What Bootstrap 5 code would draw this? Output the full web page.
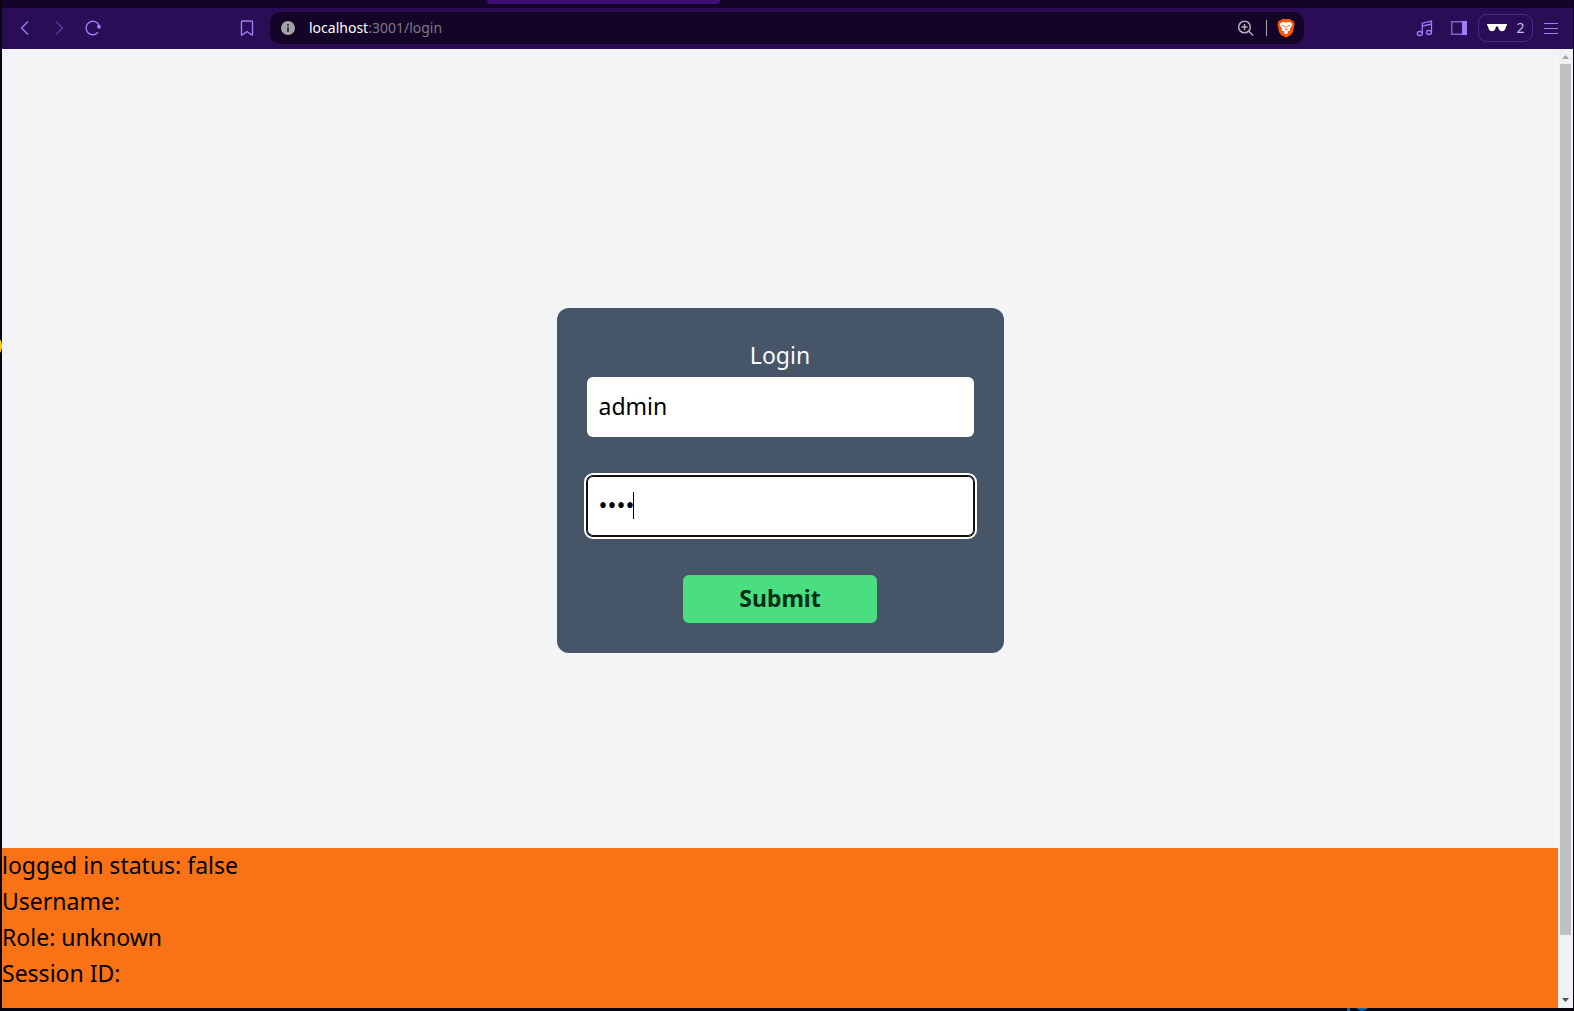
<!DOCTYPE html>
<html lang="en">
<head>
<meta charset="utf-8">
<meta name="viewport" content="width=device-width, initial-scale=1">
<title>Login</title>
<link href="https://cdn.jsdelivr.net/npm/bootstrap@5.3.0/dist/css/bootstrap.min.css" rel="stylesheet">
<style>
  body { font-family: "Noto Sans", "Open Sans", sans-serif; background: #05060f; color: #000; font-size: 23px; line-height: 34px; }
  .browser-window { padding: 0 1px 0 2px; background: radial-gradient(ellipse 2px 7px at 0 346px, #ffc800 80%, transparent) no-repeat; }
  .tab-strip { height: 8px; background: #140428; }
  .active-tab { width: 233px; height: 4px; margin-left: 485px; background: #3d1079; border-radius: 0 0 8px 8px; }
  .toolbar { height: 41px; background: #290d57; color: #a17cf5; font-size: 14px; line-height: 20px; padding: 0 15px 1px 14px; }
  .tool-btn { width: 18px; height: 24px; color: inherit; line-height: 0; }
  .tool-btn.faded { color: #5c3a9c; }
  .menu-btn { width: 14px; }
  .nav-tools { gap: 16px; width: 222px; }
  .bookmark-btn { margin-right: 14px; }
  .address { height: 32px; background: #140428; border-radius: 10px; padding: 0 7px 0 11px; }
  .address-text { color: #7e7789; font-size: 14px; margin-left: 14px; }
  .address-text b { font-weight: 400; color: #fff; }
  .addr-line { width: 1px; height: 16px; background: #aaa6b0; margin: 0 8px 0 12px; }
  .right-tools { gap: 11px; width: 254px; }
  .playlist-btn { margin-right: 5px; }
  .private-btn { width: 55px; height: 28px; border: 1px solid #4a2b82; border-radius: 9px; color: #cdbcf9; font-size: 14px; line-height: 20px; }
  .page { background: #f2f4f6; }
  .login-main { padding-top: 64px; background: #f2f4f6; }
  .login-card { width: 447px; background: #475569; border-radius: 12px; padding: 30px; }
  .login-title { color: #f8fafc; font-weight: 400; font-size: 23px; line-height: 34px; margin-bottom: 5px; }
  .field { height: 60px; padding: 10px 12px 14px; border: 0; border-radius: 6px; font-size: 23px; line-height: 36px; color: #000; background: #fff; width: 100%; display: block; font-family: "Noto Sans", sans-serif; }
  .field-name { padding: 11px 12px 13px; }
  .field-pass { font-size: 24px; box-shadow: inset 0 0 0 1px #101010, 0 0 0 1px #101010, 0 0 0 3px #fff; }
  .field-pass, .field-pass:focus { outline: 0; }
  .text-caret { left: 46px; top: 16px; width: 1px; height: 27px; background: #000; }
  .form-stack { gap: 39px; }
  .submit-btn { width: 194px; height: 48px; background: #4ade80; color: #052e16; border-radius: 6px; font-weight: 700; font-size: 23px; line-height: 34px; padding: 6px 0 8px; }
  .status-panel { height: 160px; background: #f97316; }
  .status-panel > div { padding-bottom: 2px; }
  .scroll-rail { width: 15px; background: #f1f1f1; padding: 0 2px; }
  .scroll-end { height: 15px; }
  .thumb { background: #c0c0c0; flex: 871 1 0; }
  .rail-rest { flex: 58 1 0; }
  .desktop-edge { height: 3px; gap: 14px; padding-right: 94px; }
  .edge-file { color: #3f6b2c; font-size: 24px; line-height: 24px; }
  .edge-icon { color: #0a66b0; }
</style>
<script src="https://cdn.jsdelivr.net/npm/bootstrap@5.3.0/dist/js/bootstrap.bundle.min.js"></script>
</head>
<body>
<div class="browser-window d-flex flex-column vh-100 overflow-hidden">
  <div class="tab-strip flex-shrink-0"><div class="active-tab"></div></div>
  <header class="toolbar d-flex align-items-center flex-shrink-0">
    <div class="nav-tools d-flex">
      <button class="btn p-0 border-0 tool-btn" aria-label="Back"><svg width="18" height="18" fill="none" stroke="currentColor" stroke-width="1.4"><path d="M12 2.500 5.500 9l6.500 6.500"/></svg></button>
      <button class="btn p-0 border-0 tool-btn faded" aria-label="Forward"><svg width="18" height="18" fill="none" stroke="currentColor" stroke-width="1.400"><path d="M6 2.500 12.500 9 6 15.500"/></svg></button>
      <button class="btn p-0 border-0 tool-btn" aria-label="Reload"><svg width="18" height="18" fill="none" stroke="currentColor" stroke-width="1.400"><path d="M14 13.200A6.700 6.700 0 1 1 15 6.500"/><circle cx="15" cy="7.800" r="2" fill="currentColor" stroke="none"/></svg></button>
    </div>
    <button class="btn p-0 border-0 tool-btn bookmark-btn" aria-label="Bookmark"><svg width="18" height="18" fill="none" stroke="currentColor" stroke-width="1.400" stroke-linejoin="round"><path d="M4.500 2h9q1 0 1 1v13l-1.500-.5L9 12.500l-4 3-1.500.5V3q0-1 1-1Z"/></svg></button>
    <div class="address d-flex align-items-center flex-grow-1">
      <svg width="14" height="14"><circle cx="7" cy="7" r="7" fill="#a0a2a6"/><path d="M7 6v5M7 3v2" stroke="#2a1c3a" stroke-width="1.600"/></svg>
      <span class="address-text"><b>localhost</b>:3001/login</span>
      <svg class="ms-auto" width="18" height="18" fill="none" stroke="#b3b0b8" stroke-width="1.500"><circle cx="8.500" cy="8" r="5.800"/><path d="M5.500 8h6M8.500 5v6M12.800 12.300l4.200 4.200"/></svg>
      <span class="addr-line"></span>
      <svg width="22" height="20" viewBox="0 0 22 20"><path d="M7 1h8l1.500 1.500 1.800.2L19.500 6l-1.500 8-2 3L11 19.500 6 17l-2-3L2.500 6l1.200-3.300L5.500 2.500Z" fill="#fb5607"/><path d="m6 4.500 3-.5L11 4.700 13 4l3 .5 1.300 2.300L14.800 11l.5 1.500-2.800 1L13 15l-2 1.500L9 15l.5-1.500-2.800-1 .5-1.500-2.500-4.200Z" fill="#fff"/><path d="m7 7.500 2.500.6M15 7.500l-2.500.6M11 8v2.500M9.500 11l1.500 1.200 1.500-1.200" fill="none" stroke="#fb5607"/></svg>
    </div>
    <div class="right-tools d-flex align-items-center justify-content-end">
      <button class="btn p-0 border-0 tool-btn playlist-btn" aria-label="Playlist"><svg width="18" height="24" fill="none" stroke="currentColor" stroke-width="1.300"><ellipse cx="4.800" cy="17.500" rx="2.500" ry="2"/><ellipse cx="14" cy="16.500" rx="2.500" ry="2"/><path d="M7.300 17.500V7.200L16.500 5v11.500M7.300 10.200l9.200-2.200"/></svg></button>
      <button class="btn p-0 border-0 tool-btn" aria-label="Sidebar"><svg width="18" height="24"><path d="M2.700 5.700h14v12.600h-14Z" fill="none" stroke="#8460cf" stroke-width="1.400"/><path d="M13 5h5v14h-5Z" fill="currentColor"/></svg></button>
      <button class="btn p-0 private-btn d-flex align-items-center justify-content-center gap-2" aria-label="2 private windows"><svg width="22" height="10"><path d="M1 1h20v1.500l-1 .5-.7 3Q18.500 8.300 16 8.300T12.700 6L12 3.500h-2L9.300 6Q8.500 8.300 6 8.300T2.700 6L2 3l-1-.5Z" fill="#fff"/></svg><span>2</span></button>
      <button class="btn p-0 border-0 tool-btn menu-btn" aria-label="Menu"><svg width="14" height="24" stroke="currentColor"><path d="M0 7.500h14M0 12.500h14M0 17.500h14"/></svg></button>
    </div>
  </header>
  <div class="page d-flex flex-grow-1">
    <div class="d-flex flex-column flex-grow-1">
      <main class="login-main d-flex flex-grow-1 align-items-center justify-content-center">
        <form class="login-card" onsubmit="return false">
          <h1 class="login-title text-center">Login</h1>
          <div class="form-stack d-flex flex-column align-items-center">
            <input class="field field-name" type="text" value="admin" aria-label="Username">
            <div class="position-relative w-100"><input class="field field-pass" type="password" value="pass" aria-label="Password"><span class="text-caret position-absolute"></span></div>
            <button class="btn border-0 submit-btn">Submit</button>
          </div>
        </form>
      </main>
      <section class="status-panel">
        <div>logged in status: false</div>
        <div>Username:</div>
        <div>Role: unknown</div>
        <div>Session ID:</div>
      </section>
    </div>
    <div class="scroll-rail d-flex flex-column">
      <svg class="scroll-end" width="11" height="15"><path d="m5.500 6 3.500 4H2Z" fill="#a3a3a3"/></svg>
      <div class="thumb"></div><div class="rail-rest"></div>
      <svg class="scroll-end" width="11" height="15"><path d="M2 5h7L5.500 9Z" fill="#505050"/></svg>
    </div>
  </div>
  <div class="desktop-edge flex-shrink-0 d-flex justify-content-end align-items-end overflow-hidden">
    <svg class="edge-icon flex-shrink-0" width="24" height="3" fill="currentColor"><path d="M1 0h3v3H1ZM10 0h12q-3 3-6 3t-6-3Z"/></svg>
    <span class="edge-file">hooks.ts</span>
  </div>
</div>
</body>
</html>
